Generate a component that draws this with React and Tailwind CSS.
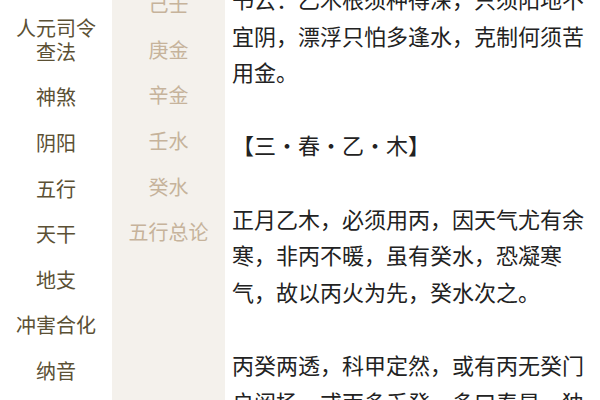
const LEFT = [
  ['人元司令', '查法'],
  ['神煞'],
  ['阴阳'],
  ['五行'],
  ['天干'],
  ['地支'],
  ['冲害合化'],
  ['纳音'],
  ['纳音二'],
];

const MIDDLE = ['己壬', '庚金', '辛金', '壬水', '癸水', '五行总论'];

const PARAS = [
  '书云：乙木根须种得深，只须阳地不宜阴，漂浮只怕多逢水，克制何须苦用金。',
  '【三·春·乙·木】',
  '正月乙木，必须用丙，因天气尤有余寒，非丙不暖，虽有癸水，恐凝寒气，故以丙火为先，癸水次之。',
  '丙癸两透，科甲定然，或有丙无癸门户阐扬，或丙多乏癸，多曰春旱，独',
];

export default function App() {
  return (
    <div
      className="w-[600px] h-[400px] overflow-hidden bg-white flex"
      style={{ fontFamily: '"Noto Sans CJK SC", "Noto Sans", sans-serif' }}
    >
      <div className="w-[112px] shrink-0 flex flex-col pt-[5px]">
        {LEFT.slice(0, 8).map((lines, i) => (
          <div key={i} className="py-[10.8px] text-center text-[20px] leading-[24px] text-[#5b5034]">
            {lines.map(l => (
              <div key={l}>{l}</div>
            ))}
          </div>
        ))}
      </div>
      <div className="w-[113px] shrink-0 bg-[#f4f1ec] flex flex-col">
        <div className="-mt-[18.5px] flex flex-col">
          {MIDDLE.map(m => (
            <div key={m} className="py-[10.8px] text-center text-[20px] leading-[24px] text-[#c6b39b]">
              {m}
            </div>
          ))}
        </div>
      </div>
      <div className="flex-1 pl-[7px] pr-[8px]">
        <div className="-mt-[20px] flex flex-col gap-[36.6px] text-[22px] leading-[36.6px] text-[#222222]">
          {PARAS.map((p, i) => (
            <p key={i}>{p}</p>
          ))}
        </div>
      </div>
    </div>
  );
}
